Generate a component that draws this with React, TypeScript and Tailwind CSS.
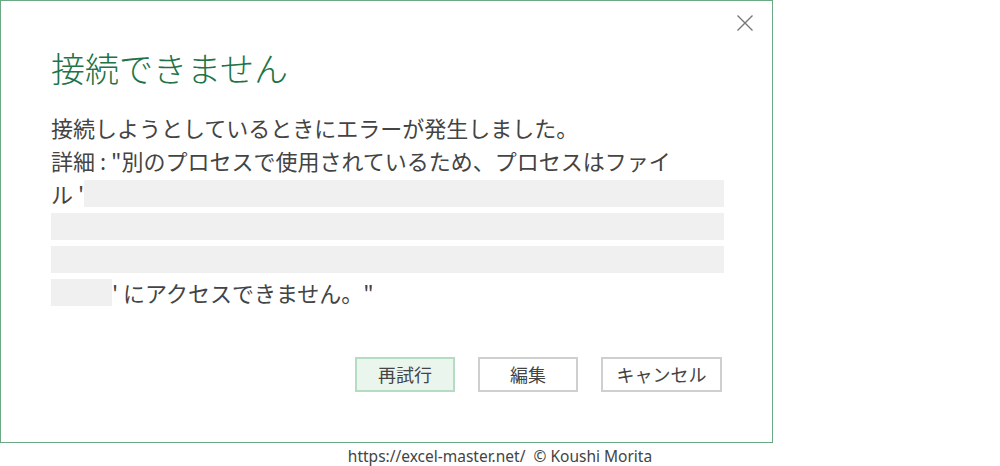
import React from 'react';

const jp = '"Noto Sans CJK JP", "Noto Sans", sans-serif';

const App: React.FC = () => {
  return (
    <div className="w-[1000px] h-[466px] bg-white" style={{ fontFamily: jp }}>
      <div className="relative w-[773px] h-[443px] border border-[#6aa983] pl-[50px] pr-[48px] pt-[45px]">
        <button className="absolute right-[18px] top-[13px] w-[18px] h-[18px] text-[#777]">
          <svg viewBox="0 0 18 18" width="18" height="18" fill="none" stroke="currentColor" strokeWidth="1.4">
            <path d="M1.5 1.5 L16.5 16.5 M16.5 1.5 L1.5 16.5" />
          </svg>
        </button>

        <h1 className="text-[34px] leading-[44px] text-[#217346] font-light">接続できません</h1>

        <div className="mt-[21px] text-[22px] leading-[33px] text-[#444]">
          <div className="h-[33px]">接続しようとしているときにエラーが発生しました。</div>
          <div className="h-[33px]">詳細 : "別のプロセスで使用されているため、プロセスはファイ</div>
          <div className="h-[33px] flex items-center">
            <span>ル '</span>
            <div className="flex-1 h-[27px] bg-[#f0f0f0]" />
          </div>
          <div className="h-[33px] flex items-center">
            <div className="flex-1 h-[27px] bg-[#f0f0f0]" />
          </div>
          <div className="h-[33px] flex items-center">
            <div className="flex-1 h-[27px] bg-[#f0f0f0]" />
          </div>
          <div className="h-[33px] flex items-center">
            <div className="w-[61px] h-[27px] bg-[#f0f0f0]" />
            <span>' にアクセスできません。"</span>
          </div>
        </div>

        <div className="mt-[48px] flex justify-end gap-[23px] pr-[2px]">
          <button className="w-[100px] h-[35px] border-2 border-[#b3dcc2] bg-[#eaf5ee] text-[18px] text-[#444]">
            再試行
          </button>
          <button className="w-[100px] h-[35px] border-2 border-[#cfcfcf] bg-white text-[18px] text-[#444]">
            編集
          </button>
          <button className="w-[121px] h-[35px] border-2 border-[#cfcfcf] bg-white text-[18px] text-[#444]">
            キャンセル
          </button>
        </div>
      </div>

      <div className="pt-[3px] text-center text-[15.5px] leading-[20px] text-[#444]" style={{ fontFamily: '"Noto Sans", sans-serif' }}>
        https://excel-master.net/&nbsp;&nbsp;© Koushi Morita
      </div>
    </div>
  );
};

export default App;
